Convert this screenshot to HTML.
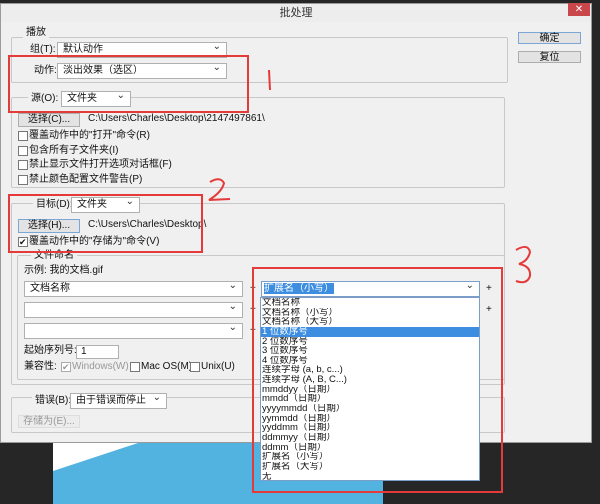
<!DOCTYPE html>
<html><head><meta charset="utf-8"><style>
*{box-sizing:border-box;margin:0;padding:0}
body{width:600px;height:504px;overflow:hidden;background:#262626;position:relative;font:10px "Liberation Sans","Noto Sans CJK SC",sans-serif;color:#111}
.a{position:absolute}
.dlg{left:0;top:3px;width:592px;height:440px;background:#f0f0f0;border:1px solid #9a9a9a}
.title{left:1px;top:4px;width:590px;height:18px;background:#ededed;text-align:center;line-height:18px;font-size:11px;color:#333}
.close{left:568px;top:3px;width:22px;height:13px;background:#c9474a;color:#fff;text-align:center;line-height:13px;font-size:10px}
.gb{border:1px solid #c8c8c8;border-radius:2px}
.lg{background:#f0f0f0;padding:0 3px;line-height:11px}
.sel{background:#fff;border:1px solid #b0b0b0;line-height:14px;padding-left:5px;height:16px;overflow:visible;white-space:nowrap}
.sel:after{content:"⌄";position:absolute;right:5px;top:-3px;font-size:10px;color:#333}
.btn{background:#e3e3e3;border:1px solid #adadad;text-align:center;line-height:12px;white-space:nowrap}
.cb{width:10px;height:10px;border:1px solid #777;background:#fff}
.t{white-space:nowrap;line-height:12px}
.red{border:2px solid #e53a3a}
.list{left:260px;top:297px;width:220px;height:184px;background:#fff;border:1px solid #7a9ec8;font-size:9.5px;overflow:hidden}
.list div{padding-left:1px;height:9.65px;line-height:9.65px;white-space:nowrap;overflow:hidden}
</style></head><body>
<div class="a" style="left:53px;top:443px;width:330px;height:61px;background:#53b3e0"></div>
<svg class="a" style="left:53px;top:443px" width="90" height="30"><polygon points="0,0 85,0 0,28" fill="#fff"/></svg>
<div class="a dlg"></div>
<div class="a title">批处理</div>
<div class="a close">✕</div>

<div class="a gb" style="left:11px;top:37px;width:497px;height:46px"></div>
<div class="a lg t" style="left:23px;top:27px">播放</div>
<div class="a t" style="left:30px;top:44px">组(T):</div>
<div class="a sel" style="left:57px;top:42px;width:170px">默认动作</div>
<div class="a t" style="left:34px;top:65px">动作:</div>
<div class="a sel" style="left:57px;top:63px;width:170px">淡出效果（选区）</div>

<div class="a gb" style="left:11px;top:97px;width:494px;height:91px"></div>
<div class="a lg t" style="left:28px;top:93px">源(O):</div>
<div class="a sel" style="left:61px;top:91px;width:70px">文件夹</div>
<div class="a btn" style="left:18px;top:113px;width:62px;height:14px">选择(C)...</div>
<div class="a t" style="left:88px;top:113px">C:\Users\Charles\Desktop\2147497861\</div>
<div class="a cb" style="left:18px;top:131px"></div><div class="a t" style="left:29px;top:130px">覆盖动作中的"打开"命令(R)</div>
<div class="a cb" style="left:18px;top:146px"></div><div class="a t" style="left:29px;top:145px">包含所有子文件夹(I)</div>
<div class="a cb" style="left:18px;top:160px"></div><div class="a t" style="left:29px;top:159px">禁止显示文件打开选项对话框(F)</div>
<div class="a cb" style="left:18px;top:175px"></div><div class="a t" style="left:29px;top:174px">禁止颜色配置文件警告(P)</div>

<div class="a gb" style="left:11px;top:203px;width:494px;height:182px"></div>
<div class="a lg t" style="left:33px;top:199px">目标(D):</div>
<div class="a sel" style="left:71px;top:197px;width:69px">文件夹</div>
<div class="a btn" style="left:18px;top:219px;width:62px;height:14px;border-color:#7aa7d6">选择(H)...</div>
<div class="a t" style="left:88px;top:219px">C:\Users\Charles\Desktop\</div>
<div class="a cb" style="left:18px;top:237px;font-size:9px;line-height:8px">✔</div><div class="a t" style="left:29px;top:236px">覆盖动作中的"存储为"命令(V)</div>

<div class="a gb" style="left:17px;top:255px;width:488px;height:125px"></div>
<div class="a lg t" style="left:31px;top:250px">文件命名</div>
<div class="a t" style="left:24px;top:265px">示例: 我的文档.gif</div>
<div class="a sel" style="left:24px;top:281px;width:219px">文档名称</div>
<div class="a sel" style="left:24px;top:302px;width:219px"></div>
<div class="a sel" style="left:24px;top:323px;width:219px"></div>
<div class="a t" style="left:250px;top:283px">+</div><div class="a t" style="left:250px;top:304px">+</div><div class="a t" style="left:250px;top:325px">+</div>
<div class="a t" style="left:486px;top:283px">+</div><div class="a t" style="left:486px;top:304px">+</div>
<div class="a sel" style="left:261px;top:281px;width:219px;border-color:#7a9ec8;padding-left:2px"><span style="background:#3d8ee0;color:#fff">扩展名（小写）</span></div>
<div class="a t" style="left:24px;top:345px">起始序列号:</div>
<div class="a" style="left:76px;top:345px;width:43px;height:14px;background:#fff;border:1px solid #b0b0b0;padding-left:4px;line-height:12px">1</div>
<div class="a t" style="left:24px;top:361px">兼容性:</div>
<div class="a cb" style="left:61px;top:362px;border-color:#aaa;color:#999;font-size:9px;line-height:8px">✔</div><div class="a t" style="left:72px;top:361px;color:#999">Windows(W)</div>
<div class="a cb" style="left:130px;top:362px"></div><div class="a t" style="left:141px;top:361px">Mac OS(M)</div>
<div class="a cb" style="left:190px;top:362px"></div><div class="a t" style="left:201px;top:361px">Unix(U)</div>

<div class="a gb" style="left:11px;top:397px;width:494px;height:36px"></div>
<div class="a lg t" style="left:32px;top:395px">错误(B):</div>
<div class="a sel" style="left:70px;top:393px;width:97px">由于错误而停止</div>
<div class="a btn" style="left:18px;top:415px;width:62px;height:13px;color:#999;background:#ececec;border-color:#ddd">存储为(E)...</div>

<div class="a btn" style="left:518px;top:32px;width:63px;height:12px;border-color:#7aa7d6">确定</div>
<div class="a btn" style="left:518px;top:51px;width:63px;height:12px">复位</div>

<div class="a list">
<div>文档名称</div><div>文档名称（小写）</div><div>文档名称（大写）</div>
<div style="background:#3d8ee0;color:#fff">1 位数序号</div>
<div>2 位数序号</div><div>3 位数序号</div><div>4 位数序号</div>
<div>连续字母 (a, b, c...)</div><div>连续字母 (A, B, C...)</div>
<div>mmddyy（日期）</div><div>mmdd（日期）</div><div>yyyymmdd（日期）</div><div>yymmdd（日期）</div><div>yyddmm（日期）</div><div>ddmmyy（日期）</div><div>ddmm（日期）</div>
<div>扩展名（小写）</div><div>扩展名（大写）</div><div>无</div>
</div>

<div class="a red" style="left:8px;top:55px;width:241px;height:58px"></div>
<div class="a red" style="left:8px;top:194px;width:195px;height:59px"></div>
<div class="a red" style="left:252px;top:267px;width:251px;height:226px"></div>
<svg class="a" style="left:0;top:0" width="600" height="504" fill="none" stroke="#e53a3a" stroke-width="2">
<path d="M269 70 L270 90"/>
<path d="M210 182 Q220 176 224 183 Q222 192 209 200 L230 199"/>
<path d="M516 250 Q528 243 530 252 Q528 261 519 264 Q531 266 530 276 Q527 285 516 281"/>
</svg>
</body></html>
